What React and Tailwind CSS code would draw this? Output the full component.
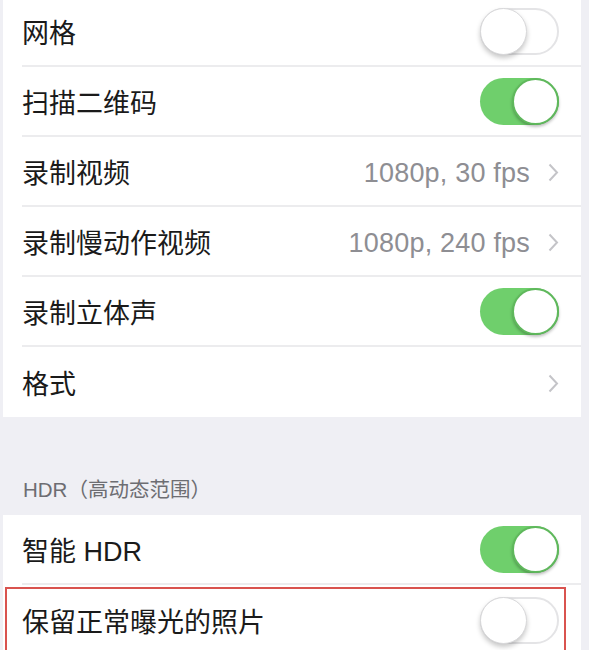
const font = { fontFamily: '"Liberation Sans", "Noto Sans CJK SC", sans-serif' };

function Toggle({ on }) {
  return (
    <div
      className={`relative h-[47px] w-[79px] rounded-full ${
        on ? "bg-[#6fcf6c]" : "bg-white border-[2px] border-[#e4e4e6]"
      }`}
    >
      <div
        className={`absolute top-0 h-[47px] w-[47px] rounded-full bg-white ${
          on
            ? "right-0 border-[2px] border-[#5fb85c] shadow-[0_2px_3px_rgba(0,0,0,0.25)]"
            : "left-[-2px] top-[-2px] border border-[#d8d8da] shadow-[0_3px_5px_rgba(0,0,0,0.22)]"
        }`}
      />
    </div>
  );
}

function Chevron() {
  return (
    <svg width="11" height="19" viewBox="0 0 11 19" className="ml-[18px] mt-[2px]">
      <path d="M1.5 1.5 L9 9.5 L1.5 17.5" fill="none" stroke="#c4c4c8" strokeWidth="2" />
    </svg>
  );
}

function Row({ label, value, toggle, chevron, last }) {
  return (
    <div className="flex h-[70px] items-center pl-[19px]">
      <div
        className={`flex h-full flex-1 items-center pr-[22px] ${
          last ? "" : "border-b-[2px] border-[#ececee]"
        }`}
      >
        <span className="flex-1 pt-[6px] text-[27px] text-[#1a1a1a]">{label}</span>
        {value && (
          <span className="pt-[4px] text-[27px] tracking-[0.2px] text-[#8e8e93]">{value}</span>
        )}
        {chevron && <Chevron />}
        {toggle !== undefined && <Toggle on={toggle} />}
      </div>
    </div>
  );
}

export default function App() {
  return (
    <div className="h-[650px] w-[589px] overflow-hidden bg-[#efeff4]" style={font}>
      <div className="ml-[3px] mr-[8px] mt-[-3px] bg-white">
        <Row label="网格" toggle={false} />
        <Row label="扫描二维码" toggle={true} />
        <Row label="录制视频" value="1080p, 30 fps" chevron />
        <Row label="录制慢动作视频" value="1080p, 240 fps" chevron />
        <Row label="录制立体声" toggle={true} />
        <Row label="格式" chevron last />
      </div>

      <div className="flex h-[98px] items-end pb-[9px] pl-[23px] text-[20.5px] text-[#6d6d72]">
        HDR（高动态范围）
      </div>

      <div className="ml-[3px] mr-[8px] bg-white">
        <Row label="智能 HDR" toggle={true} />
        <div className="relative">
          <Row label="保留正常曝光的照片" toggle={false} last />
          <div className="absolute left-[2px] top-[2px] h-[80px] w-[561px] border-[2px] border-[#d9534f]" />
        </div>
      </div>
    </div>
  );
}
